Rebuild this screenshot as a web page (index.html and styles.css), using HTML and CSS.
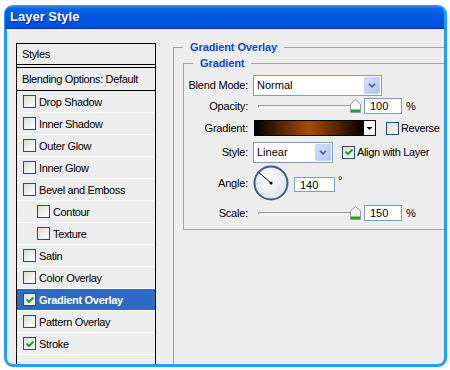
FILE: index.html
```html
<!DOCTYPE html>
<html lang="en">
<head>
    <meta charset="UTF-8">
    <meta name="viewport" content="width=device-width, initial-scale=1.0">
    <title>Layer Style</title>
    <link rel="stylesheet" href="styles.css">
</head>
<body>
    <div class="window">
        <div class="titlebar">Layer Style</div>
        <div class="client">
            <ul class="styles-list">
                <li class="head">Styles</li>
                <li class="head blend">Blending Options: Default</li>
                <li><span class="cb"></span>Drop Shadow</li>
                <li><span class="cb"></span>Inner Shadow</li>
                <li><span class="cb"></span>Outer Glow</li>
                <li><span class="cb"></span>Inner Glow</li>
                <li><span class="cb"></span>Bevel and Emboss</li>
                <li class="sub"><span class="cb"></span>Contour</li>
                <li class="sub"><span class="cb"></span>Texture</li>
                <li><span class="cb"></span>Satin</li>
                <li><span class="cb"></span>Color Overlay</li>
                <li class="on"><span class="cb"><svg viewBox="0 0 10 10"><path d="M1.5 4.5 L4 7 L8.5 2.5"/></svg></span>Gradient Overlay</li>
                <li><span class="cb"></span>Pattern Overlay</li>
                <li><span class="cb"><svg viewBox="0 0 10 10"><path d="M1.5 4.5 L4 7 L8.5 2.5"/></svg></span>Stroke</li>
                <li></li>
            </ul>
            <div class="panel">
                <fieldset class="group outer">
                    <legend>Gradient Overlay</legend>
                    <fieldset class="group inner">
                        <legend>Gradient</legend>
                        <div class="form">
                            <label>Blend Mode:</label>
                            <div class="ctl">
                                <div class="select wide">
                                    <span class="val">Normal</span>
                                    <span class="arrow"><svg viewBox="0 0 16 17"><path d="M4.5 6.5 L8 10 L11.5 6.5"/></svg></span>
                                </div>
                            </div>

                            <label>Opacity:</label>
                            <div class="ctl">
                                <div class="slider">
                                    <span class="track"></span>
                                    <svg class="thumb" viewBox="0 0 11 14"><path class="thumb-body" d="M0.5 13.5 V5 L5.5 0.5 L10.5 5 V13.5 Z"/><rect class="thumb-foot" x="1" y="10.5" width="9" height="2.5"/></svg>
                                </div>
                                <div class="num">100</div>
                                <span class="unit">%</span>
                            </div>

                            <label>Gradient:</label>
                            <div class="ctl">
                                <div class="gradbar"></div>
                                <span class="gradbtn"><svg viewBox="0 0 10 14"><path d="M2 6 H8 L5 9 Z"/></svg></span>
                                <span class="cb reverse"></span>
                                <span class="cb-text">Reverse</span>
                            </div>

                            <label>Style:</label>
                            <div class="ctl">
                                <div class="select narrow">
                                    <span class="val">Linear</span>
                                    <span class="arrow"><svg viewBox="0 0 16 17"><path d="M4.5 6.5 L8 10 L11.5 6.5"/></svg></span>
                                </div>
                                <span class="cb align"><svg viewBox="0 0 10 10"><path d="M1.5 4.5 L4 7 L8.5 2.5"/></svg></span>
                                <span class="cb-text">Align with Layer</span>
                            </div>

                            <label>Angle:</label>
                            <div class="ctl">
                                <svg class="dial" viewBox="0 0 36 36">
                                    <defs>
                                        <radialGradient id="dialfill" cx="45%" cy="40%" r="60%">
                                            <stop offset="0" stop-color="#ffffff"/>
                                            <stop offset="1" stop-color="#dde2ea"/>
                                        </radialGradient>
                                    </defs>
                                    <circle cx="18" cy="18" r="16.5" fill="url(#dialfill)" stroke="#3f5b8c" stroke-width="2"/>
                                    <line x1="18" y1="18" x2="6" y2="7.6" stroke="#000" stroke-width="1"/>
                                    <circle cx="18" cy="18" r="1.6" fill="#000"/>
                                </svg>
                                <div class="num angle">140</div>
                                <span class="deg">°</span>
                            </div>

                            <label>Scale:</label>
                            <div class="ctl">
                                <div class="slider">
                                    <span class="track"></span>
                                    <svg class="thumb" viewBox="0 0 11 14"><path class="thumb-body" d="M0.5 13.5 V5 L5.5 0.5 L10.5 5 V13.5 Z"/><rect class="thumb-foot" x="1" y="10.5" width="9" height="2.5"/></svg>
                                </div>
                                <div class="num">150</div>
                                <span class="unit">%</span>
                            </div>
                        </div>
                    </fieldset>
                </fieldset>
            </div>
        </div>
    </div>
</body>
</html>
```

FILE: styles.css
```css
* {margin: 0; padding: 0; box-sizing: border-box;}
body {
    background: #fff;
    font-family: "Liberation Sans", Arial, sans-serif;
    font-size: 11px;
    color: #000;
}
.window {
    width: 443px;
    height: 362px;
    margin: 5px 0 0 4px;
    padding: 1px 3px 3px 3px;
    background: #1ea0f8;
    border-radius: 9px 9px 9px 9px;
    display: flex;
    flex-direction: column;
}
.titlebar {
    height: 23px;
    margin-left: -2px;
    padding-left: 5px;
    line-height: 22px;
    font-size: 13px;
    font-weight: bold;
    color: #fff;
    text-shadow: 1px 1px 0 #0a2c9c;
    background: linear-gradient(#3a86f2 0, #0a60e6 3px, #0055e3 60%, #0051da 100%);
    border-bottom: 1px solid #0036ae;
    border-radius: 7px 7px 0 0;
}
.client {
    flex: 1;
    display: flex;
    align-items: flex-start;
    padding: 14px 0 0 9px;
    background: #ededed;
    border-radius: 0 0 6px 6px;
    overflow: hidden;
}

/* left list */
.styles-list {
    list-style: none;
    width: 140px;
    height: 340px;
    flex-shrink: 0;
    border: 1px solid #000;
    border-bottom: none;
    letter-spacing: -0.35px;
}
.styles-list li {
    height: 22px;
    display: flex;
    align-items: center;
    padding-left: 6px;
    border-bottom: 1px solid #fff;
}
.styles-list li.head {
    height: 21px;
    padding-left: 5px;
    border-bottom: 1px solid #000;
}
.styles-list li.blend {
    height: 24px;
    margin-top: 2px;
    border-top: 1px solid #000;
}
.styles-list li.sub {
    padding-left: 20px;
}
.styles-list li.on {
    background: #316ac5;
    color: #fff;
    font-weight: bold;
    letter-spacing: -0.3px;
}
.styles-list .cb {
    margin-right: 3px;
}

/* checkbox */
.cb {
    width: 13px;
    height: 13px;
    flex-shrink: 0;
    display: inline-flex;
    align-items: center;
    justify-content: center;
    border: 1px solid #1c5180;
    background: linear-gradient(135deg, #dcdcd6, #fff);
}
.cb svg {
    width: 10px;
    height: 10px;
}
.cb path {
    fill: none;
    stroke: #21a121;
    stroke-width: 2;
}

/* right panel */
.panel {
    flex: 1;
    margin: -2px -40px 0 17px;
}
.group {
    border: 1px solid #a3a29b;
    min-width: 0;
}
.group legend {
    line-height: 13px;
    padding: 0 7px;
    font-weight: bold;
    color: #0b48d6;
    letter-spacing: -0.1px;
}
.outer {
    height: 400px;
    padding: 0 0 0 9px;
}
.inner {
    margin-top: 3px;
    padding: 4px 0 5px 0;
}
.inner legend {
    margin-left: 9px;
}
.form {
    display: grid;
    grid-template-columns: 64px 1fr;
    grid-template-rows: 22px 20px 24px 24px 38px 22px;
    column-gap: 5px;
    align-items: center;
}
.form label {
    text-align: right;
    letter-spacing: -0.2px;
}
.ctl {
    display: flex;
    align-items: center;
}

/* select */
.select {
    height: 21px;
    display: flex;
    align-items: center;
    justify-content: space-between;
    background: #fff;
    border: 1px solid #7f9db9;
    padding: 1px;
}
.select.wide {width: 129px;}
.select.narrow {width: 80px;}
.select .val {
    padding-left: 2px;
}
.select .arrow {
    width: 16px;
    height: 17px;
    display: flex;
    background: linear-gradient(135deg, #d2dffb, #b2c6f4);
    border: 1px solid #c3d3fd;
    border-radius: 1px;
}
.select .arrow svg {
    width: 100%;
    height: 100%;
}
.select .arrow path {
    fill: none;
    stroke: #4d6185;
    stroke-width: 2;
}

/* slider */
.slider {
    position: relative;
    width: 108px;
    height: 16px;
}
.track {
    position: absolute;
    left: 5px;
    right: 4px;
    top: 7px;
    height: 3px;
    background: #ecebe6;
    border-top: 1px solid #9d9c99;
    border-bottom: 1px solid #fff;
    border-left: 1px solid #9d9c99;
}
.thumb {
    position: absolute;
    left: 97px;
    top: 1px;
    width: 11px;
    height: 14px;
}
.thumb-body {
    fill: #f6f6f2;
    stroke: #8b9aa8;
    stroke-width: 1;
}
.thumb-foot {
    fill: #21a121;
}
.num {
    width: 38px;
    height: 16px;
    margin-left: 3px;
    padding-left: 5px;
    line-height: 14px;
    background: #fff;
    border: 1px solid #7f9db9;
}
.unit {
    margin-left: 4px;
}

/* gradient */
.gradbar {
    width: 110px;
    height: 16px;
    margin-left: 1px;
    border: 1px solid #000;
    background: linear-gradient(90deg, #000 0%, #5a2600 25%, #a64d05 50%, #5a2600 75%, #000 100%);
}
.gradbtn {
    width: 12px;
    height: 16px;
    display: flex;
    background: #fff;
    border: 1px solid #000;
    border-left: none;
}
.gradbtn svg {
    width: 100%;
    height: 100%;
}
.gradbtn path {
    fill: #000;
}
.reverse {
    margin-left: 10px;
}
.align {
    margin-left: 9px;
}
.cb-text {
    margin-left: 2px;
    letter-spacing: -0.35px;
}

/* angle */
.dial {
    width: 36px;
    height: 36px;
}
.num.angle {
    width: 41px;
    height: 15px;
    margin-left: 5px;
    margin-top: 3px;
}
.deg {
    margin-left: 3px;
    align-self: flex-start;
    margin-top: 9px;
}
```
